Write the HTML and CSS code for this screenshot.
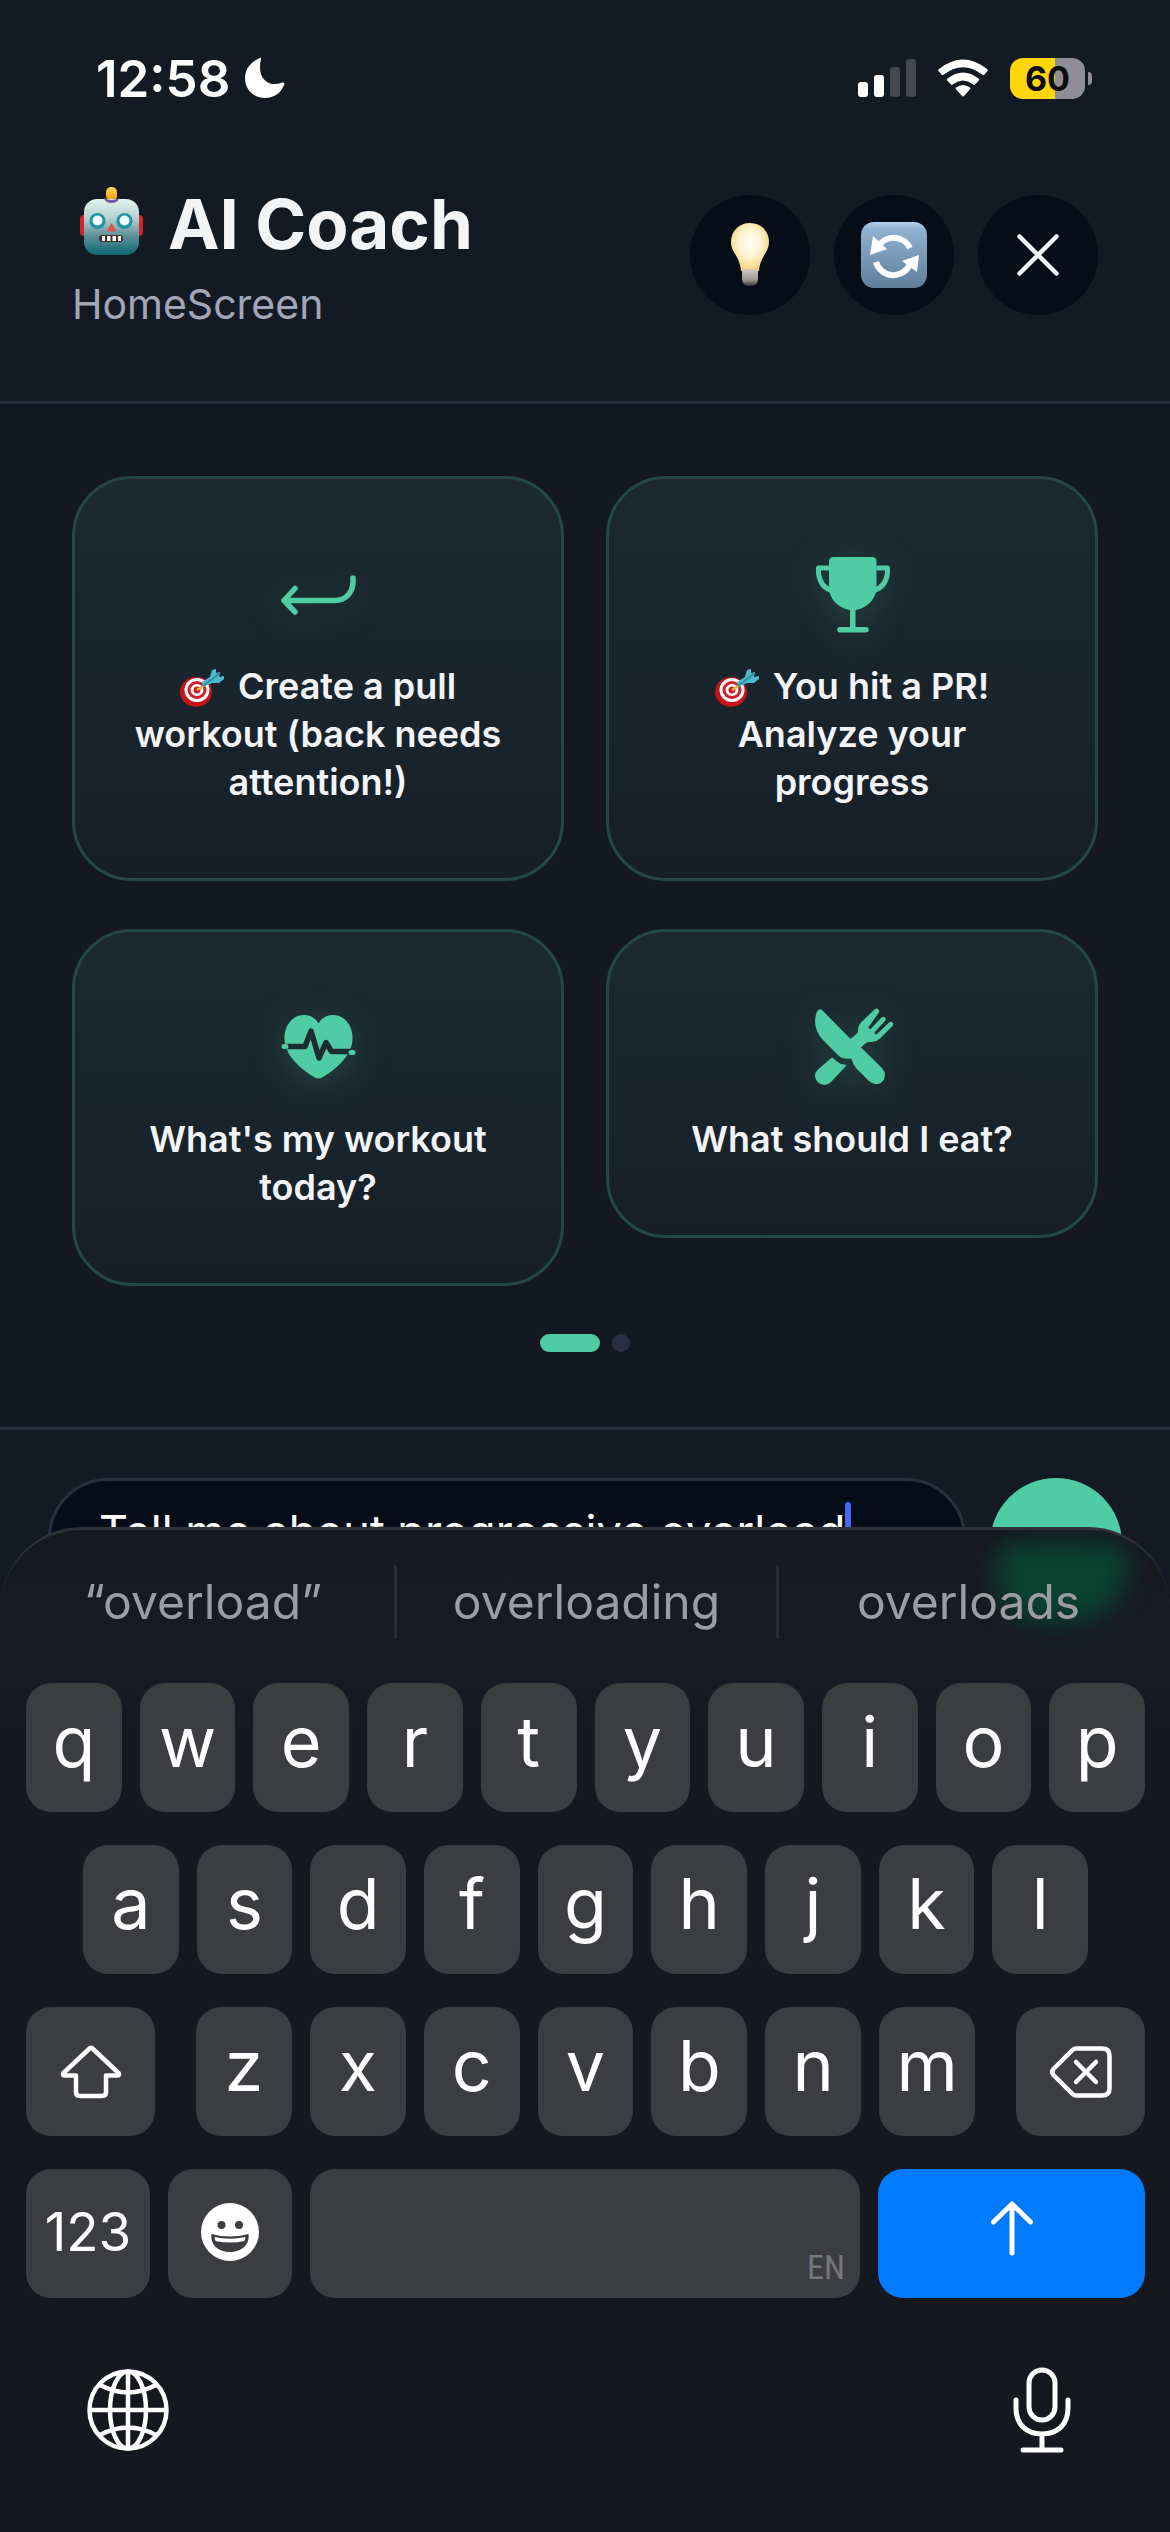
FILE: index.html
```html
<!DOCTYPE html>
<html lang="en">
<head>
<meta charset="utf-8">
<meta name="viewport" content="width=device-width, initial-scale=1">
<title>AI Coach</title>
<link rel="stylesheet" href="styles.css">
</head>
<body>
<svg class="defs" aria-hidden="true">
  <defs>
    <linearGradient id="robot-face" x1="0" y1="0" x2="0" y2="1">
      <stop offset="0" stop-color="#e4f3f1"/><stop offset=".35" stop-color="#b5cfcd"/><stop offset=".65" stop-color="#5f9199"/><stop offset="1" stop-color="#0d6675"/>
    </linearGradient>
    <linearGradient id="robot-bulb" x1="0" y1="0" x2="0" y2="1">
      <stop offset="0" stop-color="#ffd65c"/><stop offset="1" stop-color="#f09a05"/>
    </linearGradient>
    <radialGradient id="bulb-glass" cx=".5" cy=".42" r=".6">
      <stop offset="0" stop-color="#fffdf8"/><stop offset=".5" stop-color="#fdf2d0"/><stop offset="1" stop-color="#f3d071"/>
    </radialGradient>
    <linearGradient id="bulb-base" x1="0" y1="0" x2="0" y2="1">
      <stop offset="0" stop-color="#d3cbc0"/><stop offset=".65" stop-color="#98948f"/><stop offset="1" stop-color="#33353a"/>
    </linearGradient>
    <linearGradient id="tile" x1="0" y1="0" x2="0" y2="1">
      <stop offset="0" stop-color="#b5d2ec"/><stop offset=".12" stop-color="#8fb0d0"/><stop offset="1" stop-color="#5f7e9a"/>
    </linearGradient>
    <g id="dart">
      <ellipse cx="16" cy="23" rx="16" ry="15" fill="#c4141b"/>
      <ellipse cx="17" cy="21" rx="12.500" ry="12" fill="#fff"/>
      <ellipse cx="17" cy="21" rx="9.500" ry="9" fill="#d0202a"/>
      <ellipse cx="17" cy="21" rx="6.500" ry="6" fill="#fff"/>
      <ellipse cx="17" cy="21" rx="3.500" ry="3.500" fill="#d0202a"/>
      <path d="M17 21l8-5" stroke="#e9b93a" stroke-width="2.500"/>
      <path d="M23 18l-1-5 8-5 2-7 4-1v4l4-1-1 5 5-1v3l-5 4-7 0z" fill="#4fb9cc"/>
      <path d="M23 17L40 4" stroke="#2f8fa3" stroke-width="2"/>
    </g>
  </defs>
</svg>

<div class="app">
  <div class="status-bar">
    <div class="status-group status-time">
      <time>12:58</time>
      <svg class="moon" viewBox="0 0 42 42" role="img" aria-label="Do not disturb"><path d="M16 1C6 5 1 13 1 21c0 12 9 20 20 20 9 0 16-5 19-13 1-2 0-3-3-2-11 4-25-3-20-24 .300-1 0-1.500-1-1z" fill="#fff"/></svg>
    </div>
    <div class="status-group status-icons">
      <svg class="signal" viewBox="0 0 58 38" role="img" aria-label="Signal"><rect y="23" width="10" height="15" rx="3" fill="#fff"/><rect x="16" y="16" width="10" height="22" rx="3" fill="#fff"/><rect x="32" y="8" width="10" height="30" rx="3" fill="#454650"/><rect x="48" width="10" height="38" rx="3" fill="#454650"/></svg>
      <svg class="wifi" viewBox="0 0 50 38" role="img" aria-label="Wi-Fi"><path d="M1 10Q25-9 49 10q1.500 1 .500 2l-3 3.500q-1 1-2.500 0Q25 1 6 15.500q-1.500 1-2.500 0L.500 12Q-.500 11 1 10z" fill="#fff"/><path d="M9.500 19.500Q25 7.500 40.500 19.500q1.200 1 .200 2.200l-3.500 3.500q-1 1-2.200 0Q25 18 15 25.200q-1.200 1-2.200 0L9.300 21.700q-1-1.200.200-2.200z" fill="#fff"/><path d="M18 28.500q7-5 14 0 1 .800 0 1.800L26 37q-1 1-2 0l-6-6.700q-1-1 0-1.800z" fill="#fff"/></svg>
      <div class="battery" aria-label="Battery"><span class="battery-level">60</span><span class="battery-cap"></span></div>
    </div>
  </div>

  <header class="header">
    <div class="heading">
      <h1 class="title">
        <svg class="robot" viewBox="0 0 63 68" role="img" aria-label="Robot"><rect y="28" width="8" height="21" rx="4" fill="#d3242c"/><rect x="55" y="28" width="8" height="21" rx="4" fill="#d3242c"/><rect x="26" y="0" width="11" height="14" rx="5" fill="url(#robot-bulb)"/><path d="M24 11q7.500 4 15 0v2q-2 4-7.500 4T24 13z" fill="#74589f"/><rect x="4" y="12" width="55" height="56" rx="13" fill="url(#robot-face)"/><path d="M24 11q7.500 4 15 0v1q-2 4-7.500 4T24 12z" fill="#74589f"/><circle cx="17.500" cy="34" r="8" fill="#2293a0"/><circle cx="44.500" cy="34" r="8" fill="#2293a0"/><circle cx="17.500" cy="33.500" r="5" fill="#eefdff"/><circle cx="44.500" cy="33.500" r="5" fill="#eefdff"/><path d="M31.500 36l5 8.500h-10z" fill="#e0504f"/><rect x="19" y="48" width="24" height="7" rx="3" fill="#43302d"/><path d="M22 49h3v5h-3zM27 49h3.500v5H27zM32.500 49H36v5h-3.500zM38 49h3v5h-3z" fill="#fff"/></svg>
        AI Coach
      </h1>
      <p class="subtitle">HomeScreen</p>
    </div>
    <div class="actions">
      <button class="round-button" type="button" aria-label="Tips">
        <svg width="38" height="64" viewBox="0 0 38 64"><path d="M19 0C8 0 0 8 0 19c0 11 9 14 10 29h18c1-15 10-18 10-29C38 8 30 0 19 0z" fill="url(#bulb-glass)"/><path d="M11 46h16v11q-1 6-8 6t-8-6z" fill="url(#bulb-base)"/></svg>
      </button>
      <button class="round-button" type="button" aria-label="Refresh">
        <svg width="66" height="66" viewBox="0 0 66 66"><rect width="66" height="66" rx="13" fill="url(#tile)"/><path d="M17 25a18 18 0 0 1 32 1" fill="none" stroke="#fff" stroke-width="6"/><path d="M9 33l3-19 14 13z" fill="#fff"/><path d="M49 42a18 18 0 0 1-34-2" fill="none" stroke="#fff" stroke-width="6"/><path d="M58 33l-17 6 15 11z" fill="#fff"/></svg>
      </button>
      <button class="round-button" type="button" aria-label="Close">
        <svg width="42" height="42" viewBox="0 0 42 42"><path d="M2.500 2.500l37 37M39.500 2.500l-37 37" stroke="#f3f4fa" stroke-width="4.500" stroke-linecap="round"/></svg>
      </button>
    </div>
  </header>

  <main class="suggestions">
    <div class="card-grid">
      <button class="card" type="button">
        <svg class="card-icon" viewBox="0 0 87 87"><path d="M78 27v4c0 11-8 18.500-18 18.500H9M20 37.500l-11 12 11 11.500" fill="none" stroke="#50cca5" stroke-width="5.500" stroke-linecap="round" stroke-linejoin="round"/></svg>
        <span class="card-text"><svg class="dart" viewBox="0 0 44 38" role="img" aria-label="Target"><use href="#dart"/></svg> Create a pull workout (back needs attention!)</span>
      </button>
      <button class="card" type="button">
        <svg class="card-icon" viewBox="0 0 87 87"><path d="M25 6h38q4.500 0 4.500 4.500V36C67.500 48 58 57 46.500 59v17H57a2.600 2.600 0 0 1 0 5.500H31A2.600 2.600 0 0 1 31 76h10V59C29.500 57 20 48 20 36V10.500Q20 6 25 6z" fill="#50cca5"/><path d="M20 17H9.500C9 27 12 35.500 22 39.500M67.500 17h11c.500 10-3 18.500-13 22.500" fill="none" stroke="#50cca5" stroke-width="5" stroke-linejoin="round"/></svg>
        <span class="card-text"><svg class="dart" viewBox="0 0 44 38" role="img" aria-label="Target"><use href="#dart"/></svg> You hit a PR! Analyze your progress</span>
      </button>
      <button class="card" type="button">
        <svg class="card-icon" viewBox="0 0 87 87"><path d="M43.500 19.500C38 9 25 9.500 19 14c-7 5-10 13-9.500 22C10.500 51 24 64 39 73q4.500 3 9 0c15-9 28.500-22 29.500-37 .500-9-2.500-17-9.500-22-6-4.500-19-5-24.500 5.500z" fill="#50cca5"/><path d="M10 42.500h20L36 27l8 27 7-15.500 5.500 9H76" fill="none" stroke="#1b2b30" stroke-width="5.500" stroke-linejoin="round"/><path d="M9 42.500h2M76 48.500h2" stroke="#50cca5" stroke-width="5" stroke-linecap="round"/></svg>
        <span class="card-text">What's my workout today?</span>
      </button>
      <button class="card" type="button">
        <svg class="card-icon" viewBox="0 0 87 87" fill="#50cca5"><path d="M13.500 6.500Q10.500 3.500 8 7.500 4 17 8 27q2 5 6 9l16 16q4 3.500 11.500 2.500 1.500 0 2 3 1 4 4 7L60 77q7 6 13 1 6-7 0-14L52 43.500l5-4.500c1-1 2-1 6-1q5-.500 8-3.500L83.500 22q1.500-2 0-3.500t-3.500 0L68 30q-1 1-2-.200t0-2L76 17q1.500-2 0-3.500-1.500-1.500-3.500 0L62 24.500q-1 1-2 0t0-2L69.500 9q1.500-2 0-3.500-1.500-2-4 0L52 18.500q-3 3-3 8 0 2-1 3L41.500 35z"/><path d="M21.500 54.500q1.500-1.500 3 0 6 6 11 6 3 0 1 2L22 78q-6 5.500-13 .500-6-6.500-.500-12.500z"/></svg>
        <span class="card-text">What should I eat?</span>
      </button>
    </div>
    <div class="pager" aria-label="Page 1 of 2">
      <span class="pager-dot pager-dot-active"></span><span class="pager-dot"></span>
    </div>
  </main>

  <form class="composer">
    <label class="field">
      <input class="field-input" type="text" aria-label="Message" value="Tell me about progressive overload">
      <span class="caret"></span>
    </label>
    <button class="send" type="button" aria-label="Send message"></button>
  </form>
</div>

<section class="keyboard" aria-label="Keyboard">
  <div class="glow"></div>
  <div class="predictions">
    <button class="prediction" type="button">“overload”</button>
    <button class="prediction" type="button">overloading</button>
    <button class="prediction" type="button">overloads</button>
  </div>
  <div class="keys">
    <div class="key-row">
      <button class="key" type="button">q</button><button class="key" type="button">w</button><button class="key" type="button">e</button><button class="key" type="button">r</button><button class="key" type="button">t</button><button class="key" type="button">y</button><button class="key" type="button">u</button><button class="key" type="button">i</button><button class="key" type="button">o</button><button class="key" type="button">p</button>
    </div>
    <div class="key-row key-row-home">
      <button class="key" type="button">a</button><button class="key" type="button">s</button><button class="key" type="button">d</button><button class="key" type="button">f</button><button class="key" type="button">g</button><button class="key" type="button">h</button><button class="key" type="button">j</button><button class="key" type="button">k</button><button class="key" type="button">l</button>
    </div>
    <div class="key-row key-row-shift">
      <button class="key key-icon" type="button" aria-label="Shift"><svg width="62" height="54" viewBox="0 0 62 54"><path d="M29.500 3.500q1.500-1.200 3 0L58.500 28q1.500 2.500-1 2.500H46V47q0 4-4 4H20q-4 0-4-4V30.500H4.500q-2.500 0-1-2.500z" fill="none" stroke="#fff" stroke-width="4.500" stroke-linejoin="round"/></svg></button>
      <div class="key-group"><button class="key" type="button">z</button><button class="key" type="button">x</button><button class="key" type="button">c</button><button class="key" type="button">v</button><button class="key" type="button">b</button><button class="key" type="button">n</button><button class="key" type="button">m</button></div>
      <button class="key key-icon" type="button" aria-label="Delete"><svg width="62" height="54" viewBox="0 0 62 54"><path d="M26 3.500h26q7.500 0 7.500 7v33q0 7-7.500 7H26q-2 0-4-2L3.500 30q-2.500-3 0-6L22 5.500q2-2 4-2zM26 17l20 20M46 17L26 37" fill="none" stroke="#fff" stroke-width="4.500" stroke-linecap="round" stroke-linejoin="round"/></svg></button>
    </div>
    <div class="key-row key-row-space">
      <button class="key key-label" type="button">123</button>
      <button class="key key-icon key-raised" type="button" aria-label="Emoji"><svg width="58" height="58" viewBox="0 0 58 58"><circle cx="29" cy="29" r="29" fill="#fff"/><circle cx="20.500" cy="22" r="4" fill="#3c3d41"/><circle cx="38" cy="22" r="4" fill="#3c3d41"/><path d="M10.500 31q18.500 5 37 0C49 42 40 49 29 49S9 42 10.500 31z" fill="#3c3d41"/><path d="M13.500 34q15.500 3.500 31 0l-1 4q-14.500 3-29 0z" fill="#fff"/></svg></button>
      <button class="key key-space" type="button">EN</button>
      <button class="key key-send" type="button" aria-label="Send"><svg width="44" height="56" viewBox="0 0 44 56"><path d="M22 53V4M3.500 22L22 4l18.500 18" fill="none" stroke="#fff" stroke-width="5" stroke-linecap="round" stroke-linejoin="round"/></svg></button>
    </div>
  </div>
  <div class="dock">
    <button class="dock-button" type="button" aria-label="Next keyboard"><svg width="82" height="82" viewBox="0 0 82 82" fill="none" stroke="#fff" stroke-width="4.500"><circle cx="41" cy="41" r="38.500"/><ellipse cx="41" cy="41" rx="18" ry="38.500"/><path d="M41 2.500v77M2.500 41h77M13 16q28 15 56 0M13 66q28-15 56 0"/></svg></button>
    <button class="dock-button" type="button" aria-label="Dictate"><svg width="58" height="88" viewBox="0 0 58 88" fill="none" stroke="#fff" stroke-width="5" stroke-linecap="round"><rect x="16" y="4" width="26" height="50" rx="13"/><path d="M3 34v8c0 17 11 26 26 26s26-9 26-26v-8M29 68v15M10 84h38"/></svg></button>
  </div>
</section>
</body>
</html>
```

FILE: styles.css
```css
* {
  box-sizing: border-box;
}

body {
  margin: 0;
  min-height: 100vh;
  background: #141822;
  color: #f3f4f8;
  font-family: Inter, "Liberation Sans", sans-serif;
}

button {
  margin: 0;
  padding: 0;
  border: 0;
  background: none;
  color: inherit;
  font: inherit;
}

svg {
  display: block;
  overflow: visible;
}

.defs {
  position: absolute;
  width: 0;
  height: 0;
}

/* Status bar */

.status-bar {
  display: flex;
  justify-content: space-between;
  padding: 48px 78px 0 96px;
  background: #141a24;
}

.status-group {
  display: flex;
  align-items: center;
  height: 60px;
}

.status-time {
  gap: 14px;
  color: #fff;
  font-size: 51px;
  font-weight: 600;
}

.moon {
  width: 42px;
  height: 42px;
}

.status-icons {
  gap: 22px;
}

.signal {
  width: 58px;
  height: 38px;
}

.wifi {
  width: 50px;
  height: 38px;
}

.battery {
  display: flex;
  align-items: center;
  gap: 3px;
}

.battery-level {
  width: 75px;
  height: 41px;
  border-radius: 13px;
  background: linear-gradient(90deg, #ffd60a 60%, #8f8e96 60%);
  color: #0b0b10;
  font-size: 34px;
  font-weight: 700;
  line-height: 41px;
  text-align: center;
}

.battery-cap {
  width: 4px;
  height: 13px;
  border-radius: 0 4px 4px 0;
  background: #8f8e96;
}

/* Header */

.header {
  display: flex;
  align-items: center;
  justify-content: space-between;
  padding: 73px 72px 72px;
  border-bottom: 3px solid #292f3e;
  background: #141a24;
}

.title {
  display: flex;
  gap: 25px;
  margin: 0;
  padding-left: 8px;
  font-size: 69px;
  font-weight: 700;
  line-height: 86px;
}

.robot {
  width: 63px;
  height: 68px;
  margin-top: 6px;
}

.subtitle {
  margin: 12px 0 0;
  color: #a1a6b8;
  font-size: 41px;
  line-height: 50px;
}

.actions {
  display: flex;
  gap: 24px;
}

.round-button {
  display: grid;
  place-items: center;
  width: 120px;
  height: 120px;
  border-radius: 50%;
  background: #070c19;
}

/* Suggestion cards */

.suggestions {
  padding: 72px 72px 75px;
}

.card-grid {
  display: grid;
  grid-template-columns: 1fr 1fr;
  align-items: start;
  gap: 48px 42px;
}

.card {
  display: flex;
  flex-direction: column;
  align-items: center;
  gap: 24px;
  padding: 72px 54px;
  border: 3px solid #264648;
  border-radius: 60px;
  background: linear-gradient(180deg, #1c2930, #18232b 65%, #161e27);
}

.card-icon {
  width: 87px;
  height: 87px;
  filter: drop-shadow(0 6px 18px rgba(80, 204, 165, 0.2));
}

.card-text {
  font-size: 36px;
  font-weight: 600;
  line-height: 48px;
  text-align: center;
}

.dart {
  display: inline-block;
  width: 44px;
  height: 38px;
  margin-right: 5px;
  vertical-align: -8px;
}

.pager {
  display: flex;
  justify-content: center;
  gap: 12px;
  margin-top: 48px;
}

.pager-dot {
  width: 18px;
  height: 18px;
  border-radius: 9px;
  background: #2a2e40;
}

.pager-dot-active {
  width: 60px;
  background: #50cca5;
}

/* Message composer */

.composer {
  display: flex;
  gap: 24px;
  padding: 48px;
  border-top: 3px solid #292f3e;
  background: #141a24;
}

.field {
  display: flex;
  flex: 1;
  min-width: 0;
  height: 132px;
  padding: 18px 48px;
  border: 3px solid #292f3e;
  border-radius: 60px;
  background: #070c19;
}

.field-input {
  min-width: 0;
  height: 66px;
  padding: 0;
  border: 0;
  outline: 0;
  background: none;
  color: #fff;
  font: inherit;
  font-size: 45px;
  line-height: 66px;
  field-sizing: content;
}

.caret {
  flex: none;
  width: 6px;
  height: 60px;
  margin-top: 3px;
  border-radius: 3px;
  background: #4468f2;
}

.send {
  width: 132px;
  height: 132px;
  border-radius: 50%;
  background: #50cca5;
}

/* On-screen keyboard, docked over the page */

.keyboard {
  position: fixed;
  right: 0;
  bottom: 0;
  left: 0;
  overflow: hidden;
  border-top: 3px solid #30323a;
  border-radius: 82px 82px 0 0;
  background: linear-gradient(180deg, #16191e, #181b23 130px, #15181f 200px, #16181f);
}

.glow {
  position: absolute;
  top: 12px;
  right: 42px;
  width: 132px;
  height: 80px;
  border-radius: 30px 30px 80px 60px;
  background: #0a4230;
  filter: blur(12px);
}

.predictions {
  position: relative;
  display: grid;
  grid-template-columns: 1fr 1fr 1fr;
  padding: 35px 12px 45px;
}

.prediction {
  height: 73px;
  color: #9c9da1;
  font-size: 48px;
  line-height: 73px;
}

.prediction + .prediction {
  border-left: 3px solid #2b2d34;
}

.keys {
  display: grid;
  gap: 33px;
  padding: 0 25px 0 26px;
}

.key-row,
.key-group {
  display: flex;
  flex: 1;
  gap: 18px;
}

.key-row-home {
  padding: 0 57px;
}

.key-row-shift {
  display: grid;
  grid-template-columns: 129px 1fr 129px;
  gap: 41px;
}

.key-row-space {
  display: grid;
  grid-template-columns: 124fr 124fr 550fr 267fr;
}

.key {
  flex: 1;
  display: grid;
  place-items: center;
  min-width: 0;
  height: 129px;
  padding-bottom: 12px;
  border-radius: 25px;
  background: #3c3d41;
  color: #fff;
  font-size: 70px;
  line-height: 84px;
}

.key-icon {
  padding-bottom: 0;
}

.key-raised,
.key-label {
  padding-bottom: 4px;
}

.key-label {
  font-size: 53px;
}

.key-space {
  place-items: end;
  padding: 0 15px 11px 0;
  color: #76777b;
  font-family: "Liberation Sans Narrow", "Roboto Condensed", Roboto, sans-serif;
  font-size: 34px;
  line-height: 40px;
}

.key-send {
  background: #007aff;
}

.dock {
  display: flex;
  align-items: center;
  justify-content: space-between;
  padding: 64px 80px 74px;
}

.dock-button {
  display: grid;
  place-items: center;
  width: 96px;
  height: 96px;
}
```
